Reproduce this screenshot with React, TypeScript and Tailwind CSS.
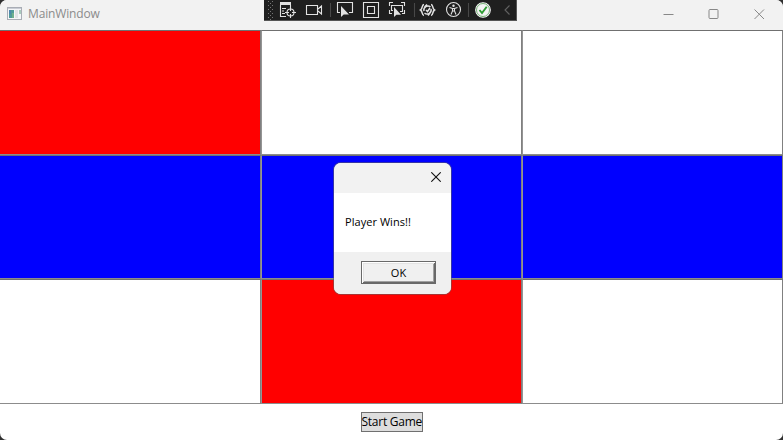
import React from "react";

const RED = "bg-[#ff0000]";
const BLUE = "bg-[#0000ff]";
const cells = [RED, "bg-white", "bg-white", BLUE, BLUE, BLUE, "bg-white", RED, "bg-white"];

function AppIcon() {
  return (
    <svg width="16" height="14" viewBox="0 0 16 14" shapeRendering="crispEdges">
      <rect x="0.5" y="0.5" width="14" height="12" fill="#f4f6f8" stroke="#a9adb5" />
      <rect x="1" y="1" width="13" height="1" fill="#c9ccd4" />
      <rect x="2" y="3" width="5" height="8" fill="#4f9a9a" />
      <rect x="2" y="3" width="2" height="4" fill="#4d86ae" />
      <rect x="5" y="6" width="2" height="5" fill="#6fb08c" />
      <rect x="8" y="3" width="3" height="8" fill="#e0e3e6" />
      <rect x="12" y="3" width="2" height="4" fill="#a9cbbd" />
    </svg>
  );
}

function DebugToolbar() {
  return (
    <div className="absolute left-[264px] top-0 h-[21px] w-[253px] border-r border-b border-[#555555] bg-[#1f1f1f]">
      <svg width="252" height="20" viewBox="264 0 252 20" fill="none" stroke="#e2e2e2" strokeWidth="1.1">
        <g fill="#777777" stroke="none">
          {[1, 5, 9, 13, 17].map((y) => (
            <React.Fragment key={y}>
              <rect x="268" y={y} width="1" height="1" />
              <rect x="272" y={y} width="1" height="1" />
              <rect x="270" y={y + 2} width="1" height="1" />
            </React.Fragment>
          ))}
        </g>
        <path d="M280 3.5H291" strokeWidth="3" />
        <path d="M280.5 5V16.5H286M282 8.5H286M282 11H284M282 13.5H285M290.5 5V7" />
        <circle cx="290.5" cy="12.5" r="3.5" />
        <path d="M290.5 7V11M290.5 14V18M285 12.5H289M292 12.5H296" />
        <path d="M306.5 5.5H317.5V14.5H306.5ZM318 9L321.5 6V14L318 11" />
        <path d="M330.5 3V17M414.5 3V17M468.5 3V17" stroke="#484848" />
        <path d="M340 12.5H337.5V2.5H352.5V12.5H349" />
        <path d="M341 6V17L343.7 14.6H349Z" fill="#e2e2e2" stroke="none" />
        <path d="M363.5 2.5H378.5V17.5H363.5ZM367.5 6.5H374.5V13.5H367.5Z" />
        <path d="M389.5 6V2.5H393M401 2.5H404.5V6M404.5 10V13.5H402M389.5 10V13.5H392M393 10.5H391.5V5.5H402.5V11.5H400" />
        <path d="M394 7V17L396.4 14.7H401Z" fill="#e2e2e2" stroke="none" />
        <path d="M424 4.5C421.5 4.5 423 8.5 420.5 10C423 11.5 421.5 15.5 424 15.5M431 4.5C433.5 4.5 432 8.5 434.5 10C432 11.5 433.5 15.5 431 15.5" strokeWidth="1.5" />
        <path d="M430.5 7A4 4 0 0 0 424 11M431 9A4 4 0 0 1 424.5 13M424.5 7L427 4.5M430 13L428 15.5M426 10L427.5 11.5L430 8" strokeWidth="1.5" />
        <circle cx="453.5" cy="9.5" r="7" />
        <circle cx="453.5" cy="5.7" r="1.2" fill="#e2e2e2" stroke="none" />
        <path d="M449.5 7.5L452.5 8.5H454.5L457.5 7.5M452.5 8.5V11L451 14.5M454.5 8.5V11L456 14.5M452.5 11H454.5" />
        <circle cx="483" cy="10" r="7.3" fill="#f4f4f4" stroke="#f4f4f4" />
        <circle cx="483" cy="10" r="6.5" stroke="#68a868" strokeWidth="0.9" />
        <path d="M479.5 10L482 13L486.7 6.7" stroke="#2d9c32" strokeWidth="1.9" />
        <path d="M509.5 5.5L505 10L509.5 14.5" stroke="#626262" />
      </svg>
    </div>
  );
}

function MessageBox() {
  return (
    <div className="absolute left-[334px] top-[163px] flex h-[131px] w-[117px] flex-col overflow-hidden rounded-[7px] bg-white text-[11px] text-black shadow-[0_0_0_1px_rgba(95,95,95,0.55)]">
      <div className="flex h-[30px] justify-end bg-[#f2f2f2] pt-[9px] pr-[10px]">
        <svg width="10" height="10" viewBox="0 0 10 10" stroke="#111111" strokeWidth="1.1">
          <path d="M0.3 0.3L9.7 9.7M9.7 0.3L0.3 9.7" />
        </svg>
      </div>
      <div className="flex h-[59px] items-center pl-[11px]">
        <span className="tracking-[0.05px] whitespace-nowrap">Player Wins!!</span>
      </div>
      <div className="flex h-[42px] bg-[#f0f0f0] pt-[9px] pl-[27px]">
        <button className="h-[23px] w-[75px] border border-[#696969] bg-[#f0f0f0] pb-px leading-none shadow-[inset_1px_1px_0_#ffffff,inset_-1px_-1px_0_#696969,inset_2px_2px_0_#e3e3e3,inset_-2px_-2px_0_#a0a0a0]">
          OK
        </button>
      </div>
    </div>
  );
}

export default function App() {
  return (
    <div className="relative h-[440px] w-[783px] overflow-hidden bg-[#303030] font-['Open_Sans','Noto_Sans',sans-serif]">
      <div className="flex h-full flex-col overflow-hidden rounded-[7px] bg-white">
        <header className="flex h-[30px] items-center justify-between bg-[#f2f2f2] pr-[18px] pb-[2px] pl-[7px]">
          <div className="flex items-center gap-[5px]">
            <AppIcon />
            <span className="text-[12px] leading-none tracking-[-0.15px] text-[#8b8b8b]">MainWindow</span>
          </div>
          <svg width="102" height="12" viewBox="0 0 102 12" fill="none" stroke="#888888">
            <path d="M0.5 6.5H10.5" />
            <rect x="46" y="1.5" width="9" height="9" rx="1" />
            <path d="M91.5 1.5L101 11M101 1.5L91.5 11" />
          </svg>
        </header>
        <main className="grid grid-cols-3 grid-rows-[125px_124px_125px]">
          {cells.map((color, i) => (
            <div
              key={i}
              className={`${color} border-t border-r border-b border-t-[#707070] border-r-[#808080] border-b-[#8c8c8c] ${
                i % 3 === 0 ? "" : "border-l border-l-[#949494]"
              }`}
            />
          ))}
        </main>
        <footer className="flex justify-center pt-[8px]">
          <button className="h-[20px] w-[62px] border border-[#707070] bg-[#dddddd] text-[12px] leading-none tracking-[-0.25px] whitespace-nowrap text-black">
            Start Game
          </button>
        </footer>
      </div>
      <DebugToolbar />
      <MessageBox />
    </div>
  );
}
